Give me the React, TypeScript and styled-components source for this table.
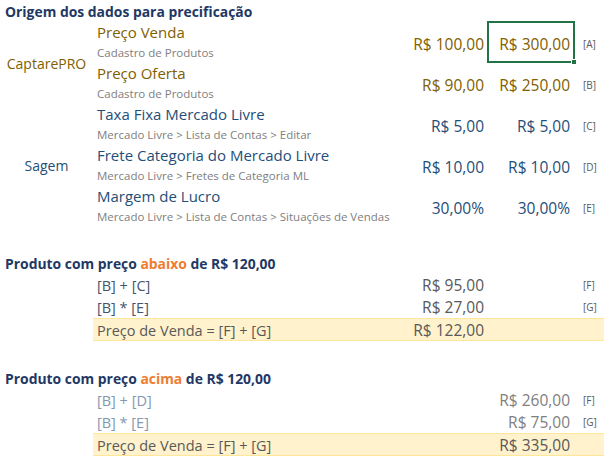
import React from "react";
import styled, { createGlobalStyle, css } from "styled-components";

const Global = createGlobalStyle`
  *, *::before, *::after { box-sizing: border-box; }
  html, body { margin: 0; padding: 0; background: #ffffff; }
  body { font-family: "Open Sans", "Noto Sans", sans-serif; }
`;

const COLS = "93px 307px 87px 88px 29px";

const Page = styled.div`
  width: 608px;
  height: 462px;
  overflow: hidden;
  display: flex;
  flex-direction: column;
`;

const Heading = styled.div<{ $gap?: number }>`
  flex: none;
  height: 22px;
  margin-top: ${(p) => p.$gap ?? 0}px;
  padding-left: 5px;
  padding-top: 1px;
  display: flex;
  align-items: center;
  font-size: 13.9px;
  font-weight: 700;
  color: #1f3864;
  white-space: nowrap;
`;

const Accent = styled.span`
  color: #ed7d31;
`;

const SourceGrid = styled.div`
  flex: none;
  display: grid;
  grid-template-columns: ${COLS};
  grid-auto-rows: 41px;
`;

const Source = styled.div<{ $color: string }>`
  grid-column: 1;
  display: flex;
  align-items: center;
  justify-content: center;
  font-size: 14px;
  color: ${(p) => p.$color};
`;

const Desc = styled.div`
  grid-column: 2;
  display: flex;
  flex-direction: column;
  padding-left: 4px;
  white-space: nowrap;
`;

const Main = styled.div<{ $color: string }>`
  height: 21px;
  line-height: 21px;
  font-size: 15px;
  color: ${(p) => p.$color};
`;

const Sub = styled.div`
  height: 20px;
  line-height: 20px;
  font-size: 11.5px;
  color: #808080;
`;

const Value = styled.div<{ $color: string; $col: number }>`
  grid-column: ${(p) => p.$col};
  position: relative;
  display: flex;
  align-items: center;
  justify-content: flex-end;
  padding-top: 2px;
  padding-right: ${(p) => (p.$col === 3 ? 3 : 5)}px;
  font-size: 15.5px;
  color: ${(p) => p.$color};
  white-space: nowrap;
`;

const Selection = styled.div`
  position: absolute;
  left: 0;
  top: -1px;
  right: 0;
  bottom: 0;
  border: 2px solid #217346;
  pointer-events: none;
  &::after {
    content: "";
    position: absolute;
    right: -4px;
    bottom: -4px;
    width: 6px;
    height: 6px;
    background: #217346;
    border: 1px solid #ffffff;
  }
`;

const Tag = styled.div`
  grid-column: 5;
  display: flex;
  align-items: center;
  padding-top: 2px;
  padding-left: 8px;
  font-size: 10px;
  color: #595959;
`;

const FormulaRow = styled.div`
  flex: none;
  display: grid;
  grid-template-columns: 93px 511px;
`;

const FormulaCells = styled.div<{ $hl?: boolean }>`
  grid-column: 2;
  display: grid;
  grid-template-columns: 307px 87px 88px 29px;
  height: 22px;
  align-items: center;
  ${(p) =>
    p.$hl &&
    css`
      height: 23px;
      background: #fff2cc;
      border-top: 1px solid #ffe699;
      border-bottom: 1px solid #ffe699;
    `}
`;

const Formula = styled.div<{ $color: string }>`
  padding-left: 4px;
  font-size: 14.5px;
  color: ${(p) => p.$color};
  white-space: nowrap;
`;

const FValue = styled.div<{ $col: number; $color: string }>`
  grid-column: ${(p) => p.$col - 1};
  justify-self: end;
  padding-right: ${(p) => (p.$col === 3 ? 3 : 5)}px;
  font-size: 15.5px;
  color: ${(p) => p.$color};
  white-space: nowrap;
`;

const FTag = styled.div`
  grid-column: 4;
  padding-left: 8px;
  font-size: 10px;
  color: #595959;
`;

const OLIVE = "#7f6000";
const BLUE = "#1f4e79";

type Item = { main: string; sub: string; v1: string; v2: string; tag: string; selected?: boolean };

const captare: Item[] = [
  { main: "Preço Venda", sub: "Cadastro de Produtos", v1: "R$ 100,00", v2: "R$ 300,00", tag: "[A]", selected: true },
  { main: "Preço Oferta", sub: "Cadastro de Produtos", v1: "R$ 90,00", v2: "R$ 250,00", tag: "[B]" },
];

const sagem: Item[] = [
  { main: "Taxa Fixa Mercado Livre", sub: "Mercado Livre > Lista de Contas > Editar", v1: "R$ 5,00", v2: "R$ 5,00", tag: "[C]" },
  { main: "Frete Categoria do Mercado Livre", sub: "Mercado Livre > Fretes de Categoria ML", v1: "R$ 10,00", v2: "R$ 10,00", tag: "[D]" },
  { main: "Margem de Lucro", sub: "Mercado Livre > Lista de Contas > Situações de Vendas", v1: "30,00%", v2: "30,00%", tag: "[E]" },
];

function Items({ items, color }: { items: Item[]; color: string }) {
  return (
    <>
      {items.map((it) => (
        <React.Fragment key={it.main}>
          <Desc>
            <Main $color={color}>{it.main}</Main>
            <Sub>{it.sub}</Sub>
          </Desc>
          <Value $col={3} $color={color}>{it.v1}</Value>
          <Value $col={4} $color={color}>
            {it.v2}
            {it.selected && <Selection />}
          </Value>
          <Tag>{it.tag}</Tag>
        </React.Fragment>
      ))}
    </>
  );
}

type FRow = { text: string; value: string; col: number; tag?: string; hl?: boolean };

function Formulas({ rows, textColor, valueColor }: { rows: FRow[]; textColor: string; valueColor: string }) {
  return (
    <>
      {rows.map((r) => (
        <FormulaRow key={r.text}>
          <FormulaCells $hl={r.hl}>
            <Formula $color={r.hl ? "#595959" : textColor}>{r.text}</Formula>
            <FValue $col={r.col} $color={r.hl ? "#595959" : valueColor}>{r.value}</FValue>
            {r.tag && <FTag>{r.tag}</FTag>}
          </FormulaCells>
        </FormulaRow>
      ))}
    </>
  );
}

export default function App() {
  return (
    <>
      <Global />
      <Page>
        <Heading>Origem dos dados para precificação</Heading>
        <SourceGrid>
          <Source $color={OLIVE} style={{ gridRow: "1 / span 2" }}>CaptarePRO</Source>
          <Items items={captare} color={OLIVE} />
          <Source $color={BLUE} style={{ gridRow: "3 / span 3" }}>Sagem</Source>
          <Items items={sagem} color={BLUE} />
        </SourceGrid>

        <Heading $gap={25}>
          Produto com preço&nbsp;<Accent>abaixo</Accent>&nbsp;de R$ 120,00
        </Heading>
        <Formulas
          textColor="#44546a"
          valueColor="#595959"
          rows={[
            { text: "[B] + [C]", value: "R$ 95,00", col: 3, tag: "[F]" },
            { text: "[B] * [E]", value: "R$ 27,00", col: 3, tag: "[G]" },
            { text: "Preço de Venda = [F] + [G]", value: "R$ 122,00", col: 3, hl: true },
          ]}
        />

        <Heading $gap={26}>
          Produto com preço&nbsp;<Accent>acima</Accent>&nbsp;de R$ 120,00
        </Heading>
        <Formulas
          textColor="#8497b0"
          valueColor="#808080"
          rows={[
            { text: "[B] + [D]", value: "R$ 260,00", col: 4, tag: "[F]" },
            { text: "[B] * [E]", value: "R$ 75,00", col: 4, tag: "[G]" },
            { text: "Preço de Venda = [F] + [G]", value: "R$ 335,00", col: 4, hl: true },
          ]}
        />
      </Page>
    </>
  );
}
